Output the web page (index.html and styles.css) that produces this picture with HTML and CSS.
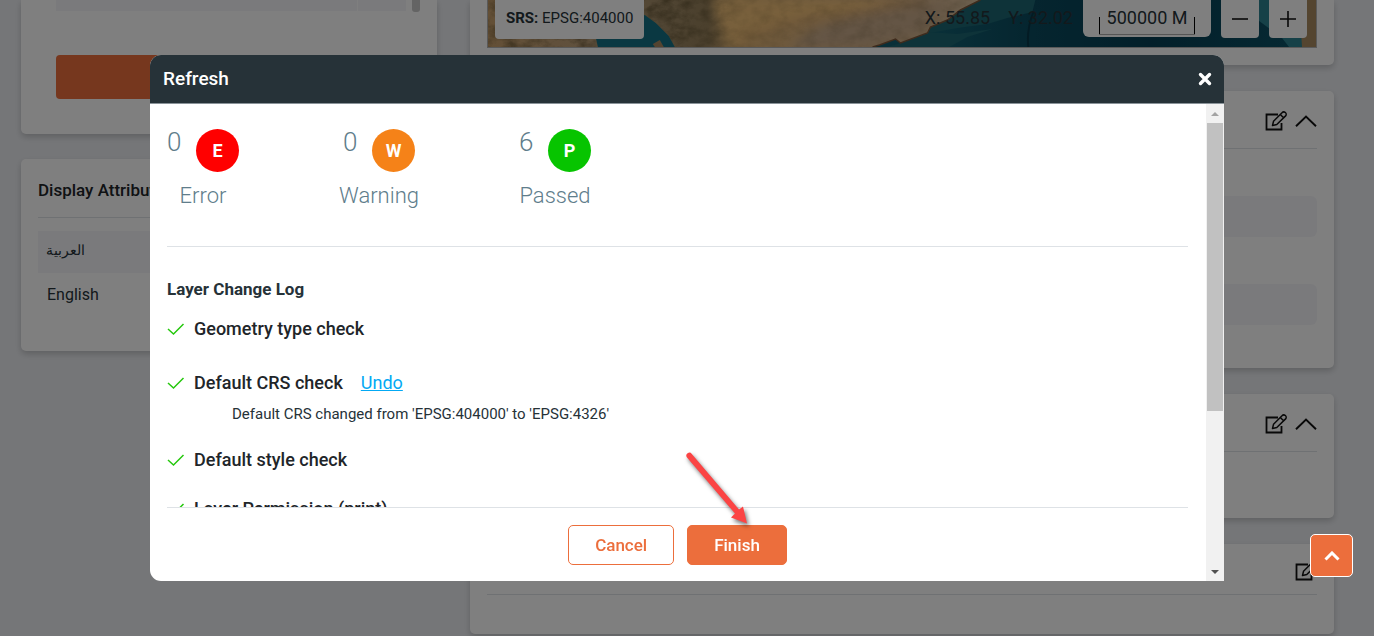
FILE: index.html
```html
<!DOCTYPE html>
<html lang="en">
<head>
<meta charset="utf-8">
<title>Layer details</title>
<link rel="stylesheet" href="styles.css">
</head>
<body>
<svg class="symbols" aria-hidden="true">
  <symbol id="edit" viewBox="0 0 22 20">
    <path d="M13 3.500H1.500V18.500H16.500V12" fill="none" stroke="currentColor" stroke-width="1.800"/>
    <path d="M7.500 14.500L8.500 10.300L17 1.800A2.200 2.200 0 0 1 20.600 4.900L11.800 13.500ZM15.300 3.500L18.600 6.700" fill="none" stroke="currentColor" stroke-width="1.500" stroke-linejoin="round"/>
  </symbol>
  <symbol id="chevron" viewBox="0 0 22 12">
    <path d="M1 11.300L11 1.500L21 11.300" fill="none" stroke="currentColor" stroke-width="1.900"/>
  </symbol>
  <symbol id="tick" viewBox="0 0 18 14">
    <path d="M1 7L6.500 12L16.500 2" fill="none" stroke="currentColor" stroke-width="1.500"/>
  </symbol>
</svg>

<main class="page">
  <div class="column left">
    <section class="card source-card">
      <div class="source-list"><div class="source-row"><span></span><span></span></div><i class="thumb"></i></div>
      <button class="source-button" type="button" aria-label="Refresh layer"></button>
    </section>
    <section class="card">
      <div class="card-head"><h2>Display Attributes</h2></div>
      <ul class="languages">
        <li lang="ar">العربية</li>
        <li>English</li>
      </ul>
    </section>
  </div>
  <div class="column">
    <section class="card map-card">
      <div class="map">
        <svg class="terrain" viewBox="0 0 829 47" preserveAspectRatio="none" aria-hidden="true">
          <defs>
            <linearGradient id="sea" x1="0" x2="1"><stop offset="0" stop-color="#155f70"/><stop offset=".55" stop-color="#125e70"/><stop offset=".66" stop-color="#0a4a5e"/><stop offset=".8" stop-color="#063f54"/><stop offset="1" stop-color="#0d5468"/></linearGradient>
            <linearGradient id="land" x1="0" x2="1"><stop offset="0" stop-color="#c79f6c"/><stop offset=".2" stop-color="#c0a27c"/><stop offset=".35" stop-color="#a08a66"/><stop offset=".44" stop-color="#96805a"/><stop offset=".5" stop-color="#e0b474"/><stop offset=".8" stop-color="#d6b084"/><stop offset="1" stop-color="#dcc3a2"/></linearGradient>
            <linearGradient id="fade" x1="0" x2="1"><stop offset="0" stop-color="#777"/><stop offset=".38" stop-color="#999"/><stop offset=".5" stop-color="#222"/><stop offset="1" stop-color="#2a2a2a"/></linearGradient>
            <mask id="relief"><rect width="500" height="47" fill="url(#fade)"/></mask>
            <filter id="soft" x="-20%" y="-50%" width="140%" height="200%"><feGaussianBlur stdDeviation="5"/></filter>
            <filter id="rough" x="0" y="0" width="100%" height="100%" color-interpolation-filters="sRGB"><feTurbulence type="fractalNoise" baseFrequency=".07 .1" numOctaves="5" seed="11"/><feColorMatrix values="0 0 0 0 .3  0 0 0 0 .25  0 0 0 0 .13  0 2.200 0 0 -.8"/></filter>
            <clipPath id="coast"><path d="M0 0H493L473 10L460 20L443 27L440 33L413 43L408 39L392 45L385 47H187L181 36L168 23L157 15L108 38L110 47H0Z"/></clipPath>
          </defs>
          <rect width="829" height="47" fill="url(#sea)"/>
          <path d="M470 10L485 3L493 0H548L545 12L520 18L500 24L470 28L443 33L440 28L460 20Z" fill="#1c6672"/>
          <path d="M410 44L440 32L470 34L505 29L480 37L462 47H400Z" fill="#1c6672"/>
          <path d="M108 10H170L190 47H108Z" fill="#157184"/>
          <g clip-path="url(#coast)">
            <rect width="500" height="47" fill="url(#land)"/>
            <path d="M225 0H430L350 14L320 17L270 32L240 47Z" fill="#f0c078" filter="url(#soft)"/>
            <path d="M300 47L335 25L430 4L470 0L430 34L380 47Z" fill="#c9ab8a" filter="url(#soft)"/>
            <path d="M252 40Q290 20 345 18Q390 8 440 2" fill="none" stroke="#dfa568" stroke-width="4" opacity=".5" filter="url(#soft)"/>
            <g mask="url(#relief)"><rect width="500" height="47" filter="url(#rough)"/></g>
          </g>
          <path d="M493 0L473 10L460 20L443 27L440 33L413 43L408 39L392 45L385 47" fill="none" stroke="#7c573a" stroke-width="1.500"/>
          <path d="M165 44L172 40L176 47H167Z" fill="#a98860"/>
          <path d="M546 12Q539 30 541 47" fill="none" stroke="#073748" stroke-width="2"/>
          <path d="M760 0L768 18L795 38L802 47H818V0Z" fill="#2c8290"/>
          <path d="M812 0H829V47H815Z" fill="#a98a60"/>
        </svg>
        <div class="srs"><strong>SRS:</strong> EPSG:404000</div>
        <div class="map-tools">
          <output class="position"><span>X: 55.85</span><span>Y: 32.02</span></output>
          <div class="scale"><span>500000 M</span></div>
          <button type="button" aria-label="Zoom out"><svg viewBox="0 0 16 16"><path d="M0 8H16" stroke="currentColor" stroke-width="1.600"/></svg></button>
          <button type="button" aria-label="Zoom in"><svg viewBox="0 0 16 16"><path d="M0 8H16M8 0V16" stroke="currentColor" stroke-width="1.600"/></svg></button>
        </div>
      </div>
    </section>
    <section class="card details-card">
      <div class="card-head actions">
        <button type="button" aria-label="Edit"><svg class="edit"><use href="#edit"/></svg></button>
        <button type="button" aria-label="Collapse"><svg class="chevron"><use href="#chevron"/></svg></button>
      </div>
      <div class="field"></div>
      <div class="field"></div>
    </section>
    <section class="card short-card">
      <div class="card-head actions">
        <button type="button" aria-label="Edit"><svg class="edit"><use href="#edit"/></svg></button>
        <button type="button" aria-label="Collapse"><svg class="chevron"><use href="#chevron"/></svg></button>
      </div>
    </section>
    <section class="card last-card">
      <div class="card-head actions">
        <button type="button" aria-label="Edit"><svg class="edit"><use href="#edit"/></svg></button>
      </div>
    </section>
  </div>
</main>

<div class="overlay">
  <div class="dialog" role="dialog" aria-modal="true" aria-labelledby="dialog-title">
    <header class="dialog-head">
      <h1 id="dialog-title">Refresh</h1>
      <button class="close" type="button" aria-label="Close"><svg viewBox="0 0 14 14"><path d="M2.500 2.500L11.500 11.500M11.500 2.500L2.500 11.500" stroke="currentColor" stroke-width="3.400" stroke-linecap="round"/></svg></button>
    </header>
    <div class="dialog-body">
      <div class="content">
        <div class="results">
          <div class="stats">
            <div class="stat"><div class="count">0 <b class="badge error">E</b></div><span>Error</span></div>
            <div class="stat"><div class="count">0 <b class="badge warning">W</b></div><span>Warning</span></div>
            <div class="stat"><div class="count">6 <b class="badge passed">P</b></div><span>Passed</span></div>
          </div>
          <h2>Layer Change Log</h2>
          <ul class="log">
            <li><div class="check"><svg><use href="#tick"/></svg>Geometry type check</div></li>
            <li><div class="check"><svg><use href="#tick"/></svg>Default CRS check <a href="#">Undo</a></div>
              <p>Default CRS changed from 'EPSG:404000' to 'EPSG:4326'</p></li>
            <li><div class="check"><svg><use href="#tick"/></svg>Default style check</div></li>
            <li><div class="check"><svg><use href="#tick"/></svg>Layer Permission (print)</div></li>
          </ul>
        </div>
        <footer>
          <button class="button outline" type="button">Cancel</button>
          <button class="button" type="button">Finish</button>
          <svg class="pointer" viewBox="0 0 70 80" aria-hidden="true"><path d="M9 6.500A3 3 0 0 1 13.800 2.900L61 58.500L65 55.500L69 72.500L53 66.500L57 62.500Z" fill="#fb4444"/></svg>
        </footer>
      </div>
      <div class="scrollbar" aria-hidden="true">
        <svg class="up" viewBox="0 0 8 4"><path d="M0 4L4 0L8 4Z" fill="currentColor"/></svg>
        <div class="track"><div class="bar"></div></div>
        <svg class="down" viewBox="0 0 8 4"><path d="M0 0L4 4L8 0Z" fill="currentColor"/></svg>
      </div>
    </div>
  </div>
</div>

<button class="to-top" type="button" aria-label="Back to top"><svg viewBox="0 0 16 10"><path d="M1.500 8.500L8 2L14.500 8.500" fill="none" stroke="currentColor" stroke-width="3"/></svg></button>
</body>
</html>
```

FILE: styles.css
```css
* { box-sizing: border-box; }

body {
  margin: 0;
  height: 100vh;
  overflow: hidden;
  background: #ebedf1;
  color: #263238;
  font: 16px/20px Roboto, "Noto Sans", sans-serif;
}

h1, h2, p, ul { margin: 0; padding: 0; }
ul { list-style: none; }
button { padding: 0; border: 0; background: none; color: inherit; font: inherit; }
svg { display: block; }
.symbols { display: none; }

.page {
  display: grid;
  grid-template-columns: 13fr 27fr;
  gap: 33px;
  padding: 0 40px 0 21px;
}

.column { display: flex; flex-direction: column; gap: 26px; }
.left { gap: 25px; }

.card {
  padding: 0 17px;
  border-radius: 5px;
  background: #fff;
  box-shadow: 0 3px 6px #00000030;
}

.card h2 { font-size: 17px; font-weight: 500; color: #212529; }

.card-head {
  display: flex;
  align-items: center;
  height: 59px;
  padding-top: 4px;
  border-bottom: 1px solid #dee2e6;
}

.source-card { padding: 0 17px 35px 35px; border-radius: 0 0 5px 5px; }
.source-list { display: flex; gap: 6px; height: 12px; margin-bottom: 43px; }
.source-row { display: grid; flex: 1; grid-template-columns: 19fr 3fr; gap: 1px; height: 11px; }
.source-row span { background: #f5f5f9; }
.thumb { width: 8px; border-radius: 0 0 3px 3px; background: #c8c8c8; }
.source-button { display: block; width: calc(100% - 18px); height: 44px; border-radius: 4px; background: #ec6e3c; }

.languages { padding: 13px 0 35px; }
.languages li { height: 43px; padding: 12px 9px; color: #263238; }
.languages li:first-child { height: 42px; padding: 9px 8px; background: #f4f4f9; font-size: 14px; }

.map-card { padding-bottom: 17px; border-radius: 0 0 5px 5px; }
.map {
  display: grid;
  grid-template-columns: auto 1fr;
  height: 48px;
  border: 1px solid #b4b4b4;
  border-top: 0;
}
.terrain { grid-area: 1 / 1 / 2 / 3; width: 100%; height: 47px; }
.srs {
  grid-area: 1 / 1;
  height: 39px;
  margin-left: 7px;
  padding: 8px 11px;
  border-radius: 0 0 4px 4px;
  background: #fff;
  font-size: 15px;
}
.srs strong { font-weight: 700; }
.map-tools { grid-area: 1 / 2; display: flex; justify-content: flex-end; gap: 10px; padding-right: 9px; }
.map-tools button {
  display: grid;
  place-items: center;
  width: 38px;
  height: 38px;
  border-radius: 0 0 4px 4px;
  background: #fff;
  color: #111;
}
.map-tools button svg { width: 16px; height: 16px; }
.position { display: flex; gap: 18px; padding-top: 8px; font-size: 18px; color: #263238; }
.scale { width: 128px; height: 37px; padding: 8px 16px 2px; border-radius: 0 0 6px 6px; background: #fff; font-size: 18px; }
.scale span {
  display: block;
  height: 27px;
  border-bottom: 1px solid #aaa;
  text-align: center;
  white-space: nowrap;
  background: linear-gradient(#000, #000) left bottom / 1px 17px no-repeat, linear-gradient(#000, #000) right bottom / 1px 17px no-repeat;
}

.actions { justify-content: flex-end; gap: 8px; height: 58px; padding-top: 3px; color: #111; }
.edit { width: 22px; height: 20px; }
.chevron { width: 22px; height: 12px; }
.details-card { display: flex; flex-direction: column; gap: 47px; padding-bottom: 43px; }
.field { height: 41px; border-radius: 6px; background: #f5f5f9; }
.short-card { padding-bottom: 66px; }
.last-card { height: 90px; }
.last-card .card-head { height: 51px; padding-top: 4px; }

.overlay {
  position: fixed;
  z-index: 1;
  inset: 0;
  display: grid;
  place-items: center;
  background: #00000080;
}

.dialog {
  display: flex;
  flex-direction: column;
  width: calc(100% - 300px);
  height: calc(100% - 110px);
  border-radius: 11px 11px 0 11px;
  overflow: hidden;
  background: #fff;
}
.dialog-head {
  display: flex;
  align-items: center;
  justify-content: space-between;
  height: 49px;
  padding: 0 12px 0 13px;
  border-bottom: 1px solid #8a9399;
  background: #263238;
  color: #fff;
}
.dialog-head h1 { font-size: 19px; font-weight: 500; }
.close svg { width: 14px; height: 14px; }

.dialog-body { display: flex; flex: 1; min-height: 0; }
.content { display: flex; flex: 1; flex-direction: column; min-width: 0; padding: 0 18px 0 17px; }
.results { flex: 1; min-height: 0; overflow: hidden; }

.stats {
  display: flex;
  gap: 104px;
  height: 143px;
  padding-top: 25px;
  border-bottom: 1px solid #dee2e6;
  color: #607d8b;
  font-weight: 300;
}
.stat { display: flex; flex-direction: column; align-items: center; gap: 10px; width: 72px; font-size: 22px; line-height: 28px; }
.count { display: flex; justify-content: space-between; width: 100%; font-size: 26px; line-height: 26px; }
.badge {
  display: grid;
  place-items: center;
  width: 43px;
  height: 43px;
  border-radius: 50%;
  color: #fff;
  font-size: 18px;
  font-weight: 700;
}
.error { background: #f00; }
.warning { background: #f58218; }
.passed { background: #07c400; }

.results h2 { margin: 32px 0 17px; font-size: 17px; font-weight: 700; }
.log { display: flex; flex-direction: column; font-size: 18px; font-weight: 500; color: #212529; }
.log li { padding-bottom: 29px; }
.check { display: flex; align-items: center; height: 25px; }
.check svg { width: 18px; height: 14px; margin-right: 9px; color: #25c80d; }
.check a { margin-left: 18px; color: #03a9f4; font-weight: 400; }
.log p { padding: 9px 0 0 65px; color: #263238; font-size: 15px; font-weight: 400; }
.log li:nth-child(2) { padding-bottom: 23px; }
.log li:nth-child(3) { padding-bottom: 24px; }

footer {
  position: relative;
  display: flex;
  justify-content: center;
  gap: 13px;
  padding: 17px 0 16px;
  border-top: 1px solid #dee2e6;
}
.button {
  height: 40px;
  padding: 0 26px;
  border: 1px solid #ec6e3c;
  border-radius: 5px;
  background: #ec6e3c;
  color: #fff;
  font-size: 17px;
  font-weight: 500;
}
.outline { background: #fff; color: #ec6e3c; }
.pointer {
  position: absolute;
  left: 50%;
  bottom: 50px;
  width: 70px;
  height: 80px;
  filter: drop-shadow(2px 3px 2px #0008);
}

.scrollbar {
  display: flex;
  flex-direction: column;
  align-items: center;
  width: 18px;
  padding: 8px 0 7px;
  background: #f1f1f1;
}
.scrollbar svg { width: 8px; height: 4px; }
.up { color: #a3a3a3; }
.down { color: #505050; }
.track { flex: 1; width: 16px; padding: 7px 0 11px; }
.bar { height: 66%; background: #c1c1c1; }

.to-top {
  position: fixed;
  z-index: 2;
  right: 21px;
  bottom: 59px;
  display: grid;
  place-items: center;
  width: 43px;
  height: 43px;
  border: 1px solid #fff;
  border-radius: 5px;
  background: #ec6e3c;
  color: #fff;
}
.to-top svg { width: 16px; height: 10px; }
```
